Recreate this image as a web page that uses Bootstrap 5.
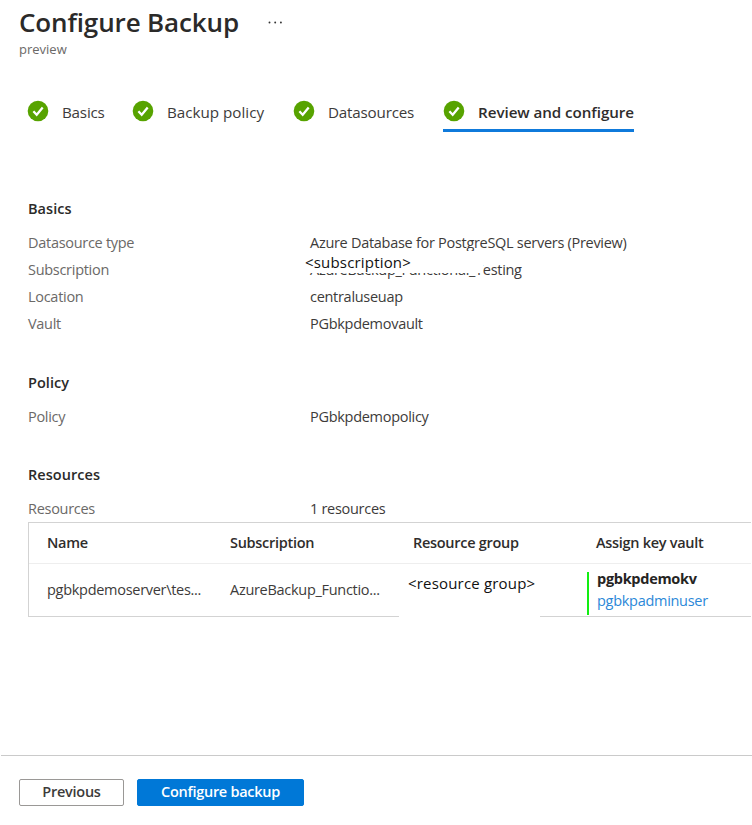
<!DOCTYPE html>
<html lang="en">
<head>
<meta charset="utf-8">
<meta name="viewport" content="width=device-width, initial-scale=1">
<title>Configure Backup</title>
<link href="https://cdn.jsdelivr.net/npm/bootstrap@5.3.0/dist/css/bootstrap.min.css" rel="stylesheet">
<style>
body{font-family:"Open Sans","Noto Sans",sans-serif;font-size:14.5px;letter-spacing:-.29px;color:#3d3b3a;background:#fff;height:825px;overflow:hidden}
.blade-title{font-size:26px;font-weight:600;line-height:36px;letter-spacing:-.13px;color:#2b2a29}
.blade-sub{font-size:13px;line-height:18px;letter-spacing:0;color:#6b6967}
.blade-head{height:98px;padding:4px 0 0 19px}
.more-dots{margin:17px 0 0 29px;width:15px;height:3px}
.steps{height:34px;padding-left:27px;gap:29px;font-size:15.2px;letter-spacing:-.2px}
.step{height:27px;gap:13px;line-height:27px}
.step:first-child{width:76px}
.step:nth-child(2){letter-spacing:0}
.step svg{width:22px;height:22px;flex:none;margin-top:-1px}
.step.current{height:34px;padding-bottom:4px;border-bottom:3px solid #0f7adb;font-weight:600;color:#2f2d2c;letter-spacing:-.07px}
.step span{padding-top:2px;white-space:nowrap}
.summary{padding-left:28px}
.sec-title{font-size:14.5px;font-weight:600;line-height:20px;margin:0 0 10px;letter-spacing:.05px;color:#2b2a29}
.info{height:27px;line-height:27px}
.info dt{width:282px;font-weight:400;color:#6b6967}
.info dd{margin:0}
.sec-basics{padding-top:67px;height:241px}
.sec-policy{height:92px}
.sec-resources{height:57px}
.note{position:absolute;background:#fff;color:#111;white-space:nowrap;font-size:15px;letter-spacing:.18px}
.note-sub{left:-5px;top:-5px;width:178px;height:22px;line-height:23px}
.note-group{left:-14px;top:1px;width:141px;height:54px;line-height:37px;padding-left:9px}
.res-table{border:1px solid #d3d3d3;border-right:0;height:95px;width:723px}
.res-row{padding-left:18px}
.res-row>div{width:183px;flex:none}
.res-head{height:41px;line-height:40px;border-bottom:1px solid #eee;font-weight:600;color:#2f2d2c}
.res-body{height:52px;line-height:51px}
.vault{height:43px;margin:8px 0 0 -9px;padding-left:8px;border-left:2px solid #12ee12;line-height:22px}
.vault strong{display:block;line-height:13px;margin-bottom:5px;color:#252423}
.vault a{color:#2b88d8;text-decoration:none}
.foot{margin-top:138px;margin-left:1px;border-top:1px solid #cacaca;padding:23px 0 0 18px;gap:13px}
.foot .btn{height:27px;padding:0 0 2px;font-size:14.5px;line-height:23px;border-radius:2px;font-weight:600;letter-spacing:-.27px}
.foot .btn-prev{width:105px;border:1px solid #9a9896;color:#3d3b3a;background:#fff}
.foot .btn-go{width:167px;background:#0078d7;border:1px solid #0078d7;color:#fff}
</style>
<script src="https://cdn.jsdelivr.net/npm/bootstrap@5.3.0/dist/js/bootstrap.bundle.min.js"></script>
</head>
<body>
<svg class="d-none"><symbol id="ok" viewBox="0 0 22 22"><circle cx="11" cy="11" r="10.3" fill="#57a300"/><path d="M6.4 11.2l3.3 3.5 6-7.2" fill="none" stroke="#fff" stroke-width="2.3"/></symbol></svg>
<header class="blade-head">
  <div class="d-flex"><h1 class="blade-title m-0">Configure Backup</h1>
  <svg class="more-dots" viewBox="0 0 15 3" fill="#333"><circle cx="1.5" cy="1.5" r=".95"/><circle cx="7.2" cy="1.5" r=".95"/><circle cx="12.9" cy="1.5" r=".95"/></svg></div>
  <div class="blade-sub">preview</div>
</header>
<nav class="steps d-flex">
  <div class="step d-flex align-items-center"><svg><use href="#ok"/></svg><span>Basics</span></div>
  <div class="step d-flex align-items-center"><svg><use href="#ok"/></svg><span>Backup policy</span></div>
  <div class="step d-flex align-items-center"><svg><use href="#ok"/></svg><span>Datasources</span></div>
  <div class="step current d-flex align-items-center"><svg><use href="#ok"/></svg><span>Review and configure</span></div>
</nav>
<main class="summary">
  <section class="sec-basics">
    <h2 class="sec-title">Basics</h2>
    <dl class="m-0">
      <div class="info d-flex"><dt>Datasource type</dt><dd>Azure Database for PostgreSQL servers (Preview)</dd></div>
      <div class="info d-flex"><dt>Subscription</dt><dd class="position-relative">AzureBackup_Functional_Testing<span class="note note-sub">&lt;subscription&gt;</span></dd></div>
      <div class="info d-flex"><dt>Location</dt><dd>centraluseuap</dd></div>
      <div class="info d-flex"><dt>Vault</dt><dd>PGbkpdemovault</dd></div>
    </dl>
  </section>
  <section class="sec-policy">
    <h2 class="sec-title">Policy</h2>
    <dl class="m-0"><div class="info d-flex"><dt>Policy</dt><dd>PGbkpdemopolicy</dd></div></dl>
  </section>
  <section class="sec-resources">
    <h2 class="sec-title">Resources</h2>
    <dl class="m-0"><div class="info d-flex"><dt>Resources</dt><dd>1 resources</dd></div></dl>
  </section>
  <div class="res-table">
    <div class="res-row res-head d-flex"><div>Name</div><div>Subscription</div><div>Resource group</div><div>Assign key vault</div></div>
    <div class="res-row res-body d-flex"><div>pgbkpdemoserver\tes...</div><div>AzureBackup_Functio...</div><div class="position-relative"><span class="note note-group">&lt;resource group&gt;</span></div>
      <div><div class="vault"><strong>pgbkpdemokv</strong><a href="#">pgbkpadminuser</a></div></div></div>
  </div>
</main>
<footer class="foot d-flex"><button class="btn btn-prev">Previous</button><button class="btn btn-go">Configure backup</button></footer>
</body>
</html>
